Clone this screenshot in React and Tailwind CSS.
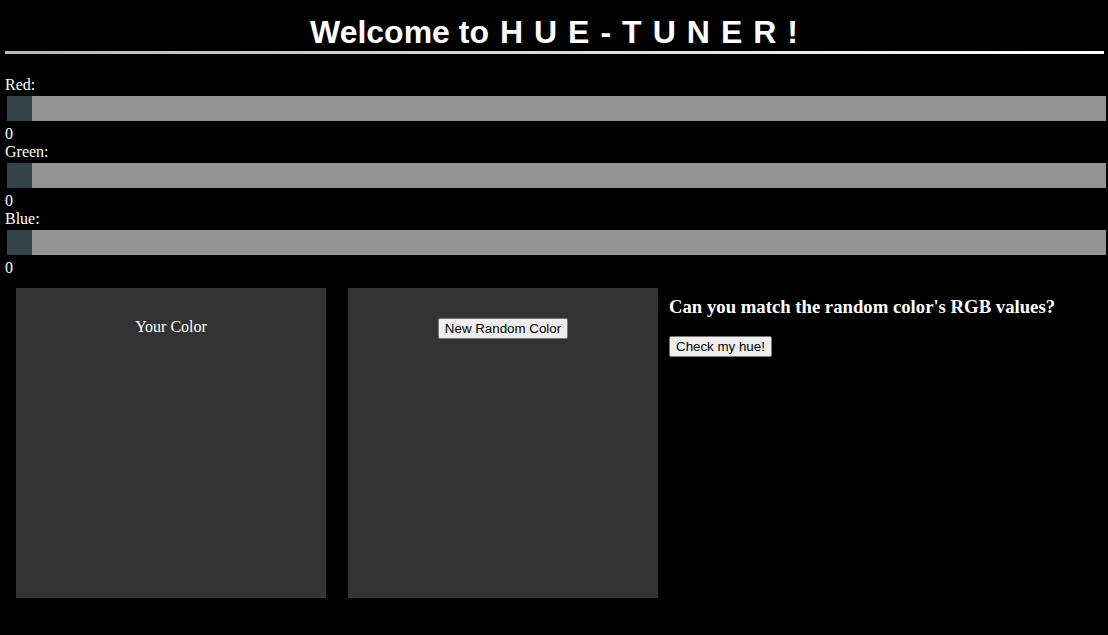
import { useState } from 'react';

const channels = ['Red', 'Green', 'Blue'];

const Slider = ({ label, value, onChange }) => (
  <div>
    <div className="h-[18px] leading-[20px]">{label}:</div>
    <div className="pr-[2px] pl-[2px] py-[3px]">
      <input
        type="range"
        min="0"
        max="255"
        value={value}
        onChange={(e) => onChange(Number(e.target.value))}
        className="block w-full h-[25px] m-0 appearance-none bg-[#939393] outline-none cursor-pointer [&::-webkit-slider-thumb]:appearance-none [&::-webkit-slider-thumb]:w-[25px] [&::-webkit-slider-thumb]:h-[25px] [&::-webkit-slider-thumb]:bg-[#344249] [&::-moz-range-thumb]:w-[25px] [&::-moz-range-thumb]:h-[25px] [&::-moz-range-thumb]:border-0 [&::-moz-range-thumb]:rounded-none [&::-moz-range-thumb]:bg-[#344249]"
      />
    </div>
    <div className="h-[18px] leading-[20px]">{value}</div>
  </div>
);

const App = () => {
  const [rgb, setRgb] = useState({ Red: 0, Green: 0, Blue: 0 });

  return (
    <div className="min-h-screen bg-black text-white pl-[5px] font-['Liberation_Serif','Times_New_Roman',serif] text-[16px]">
      {/* Header */}
      <h1 className="pt-[14px] pl-[6px] h-[51px] leading-[37px] text-center font-['Liberation_Sans',Arial,sans-serif] font-bold text-[32px]">
        Welcome to <span className="ml-[2px] tracking-[11px]">HUE-TUNER!</span>
      </h1>
      <div className="h-[3px] mr-[4px] bg-linear-to-r from-[#b8b8b8] to-white" />

      {/* RGB sliders */}
      <div className="mt-[21px]">
        {channels.map((c) => (
          <Slider
            key={c}
            label={c}
            value={rgb[c]}
            onChange={(v) => setRgb({ ...rgb, [c]: v })}
          />
        ))}
      </div>

      {/* Color boxes */}
      <div className="flex items-start mt-[12px]">
        <div className="ml-[11px] w-[310px] h-[310px] bg-[#333333] pt-[30px] text-center leading-[18px]">
          Your Color
        </div>
        <div className="ml-[22px] w-[310px] h-[310px] bg-[#333333] pt-[30px] flex justify-center items-start">
          <button className="h-[21px] px-[6px] bg-[#efefef] border border-[#767676] rounded-[2px] text-black text-[13.33px] leading-[15px] font-['Liberation_Sans',Arial,sans-serif]">
            New Random Color
          </button>
        </div>
        <div className="ml-[11px] pt-[8px]">
          <h3 className="text-[18.72px] leading-[21px] font-bold mb-[17px]">
            Can you match the random color's RGB values?
          </h3>
          <button className="h-[21px] px-[6px] bg-[#efefef] border border-[#767676] rounded-[2px] text-black text-[13.33px] leading-[15px] font-['Liberation_Sans',Arial,sans-serif]">
            Check my hue!
          </button>
        </div>
      </div>
    </div>
  );
};

export default App;
